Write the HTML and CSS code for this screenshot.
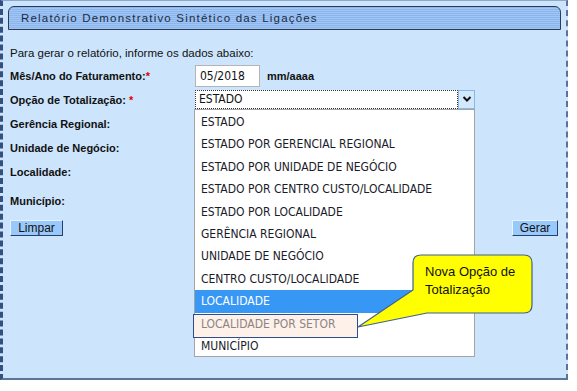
FILE: index.html
```html
<!DOCTYPE html>
<html lang="pt-BR">
<head>
  <meta charset="UTF-8">
  <meta name="viewport" content="width=device-width, initial-scale=1.0">
  <title>Relatório Demonstrativo Sintético das Ligações</title>
<link rel="stylesheet" href="styles.css">
</head>
<body>
  <div class="frame">
    <div class="title-bar">Relatório Demonstrativo Sintético das Ligações</div>
    <p class="intro">Para gerar o relatório, informe os dados abaixo:</p>

    <div class="form">
      <div class="row">
        <label class="label">Mês/Ano do Faturamento:<span class="req">*</span></label>
        <input class="field" type="text" value="05/2018">
        <span class="hint">mm/aaaa</span>
      </div>
      <div class="row">
        <label class="label">Opção de Totalização: <span class="req">*</span></label>
        <div class="select">
          <span class="select-value">ESTADO</span>
          <span class="select-arrow">
            <svg width="10" height="8" viewBox="0 0 10 8"><polyline points="1.5,2 5,5.5 8.5,2" fill="none" stroke="#111" stroke-width="2"/></svg>
          </span>
        </div>
      </div>
      <div class="row"><label class="label">Gerência Regional:</label></div>
      <div class="row row-short"><label class="label">Unidade de Negócio:</label></div>
      <div class="row row-mid"><label class="label">Localidade:</label></div>
      <div class="row row-tall"><label class="label">Município:</label></div>
    </div>

    <div class="actions">
      <button class="btn">Limpar</button>
      <button class="btn btn-gerar">Gerar</button>
    </div>

    <ul class="options">
      <li class="option">ESTADO</li>
      <li class="option">ESTADO POR GERENCIAL REGIONAL</li>
      <li class="option">ESTADO POR UNIDADE DE NEGÓCIO</li>
      <li class="option">ESTADO POR CENTRO CUSTO/LOCALIDADE</li>
      <li class="option">ESTADO POR LOCALIDADE</li>
      <li class="option">GERÊNCIA REGIONAL</li>
      <li class="option">UNIDADE DE NEGÓCIO</li>
      <li class="option">CENTRO CUSTO/LOCALIDADE</li>
      <li class="option selected">LOCALIDADE</li>
      <li class="option new">LOCALIDADE POR SETOR</li>
      <li class="option">MUNICÍPIO</li>
    </ul>

    <div class="callout">
      <svg class="callout-shape" width="180" height="78" viewBox="0 0 180 78">
        <path d="M66 2 H169 Q177 2 177 10 V52 Q177 60 169 60 H72 L3 74 L58 37 V10 Q58 2 66 2 Z" fill="#ffff00" stroke="#41608f" stroke-width="1.2"/>
      </svg>
      <p class="callout-text">Nova Opção de<br>Totalização</p>
    </div>
  </div>
</body>
</html>
```

FILE: styles.css
```css
html, body {
  margin: 0;
  padding: 0;
  background-color: #fff;
  font-family: "Liberation Sans", Arial, Helvetica, sans-serif;
}

.frame {
  position: relative;
  box-sizing: border-box;
  width: 568px;
  height: 380px;
  background-color: #cce5fc;
  border-top: 1px solid #8ea8cc;
  border-left: 3px dashed #33507e;
  border-right: 2px dashed #5a7496;
  border-bottom: 2px solid #5b7594;
}

.title-bar {
  box-sizing: border-box;
  margin: 5px 0 0 5px;
  width: 553px;
  height: 24px;
  padding-left: 12px;
  line-height: 22px;
  font-size: 11.5px;
  letter-spacing: 1.2px;
  color: #1c2c44;
  border: 1px solid #2b3b55;
  border-radius: 6px 6px 0 0;
  background: repeating-linear-gradient(#8bb5ed 0, #8bb5ed 1px, #a2c6f3 1px, #a2c6f3 2px);
}

.intro {
  margin: 15px 0 0 7px;
  line-height: 16px;
  font-size: 11.5px;
  color: #111;
}

.form {
  margin-top: 3px;
  padding-left: 7px;
}

.row {
  display: flex;
  align-items: center;
  height: 24px;
}

.row-short {
  height: 23px;
}

.row-mid {
  height: 26px;
}

.row-tall {
  height: 32px;
}

.label {
  width: 185px;
  flex-shrink: 0;
  font-size: 11px;
  font-weight: bold;
  color: #111;
}

.req {
  color: #e00000;
}

.field {
  box-sizing: border-box;
  width: 65px;
  height: 22px;
  margin: 0;
  padding: 0 4px;
  border: 1px solid #b4b4b4;
  background: #fff;
  font-family: "DejaVu Sans Condensed", "DejaVu Sans", sans-serif;
  font-size: 12px;
  color: #111;
}

.hint {
  margin-left: 7px;
  font-size: 11px;
  font-weight: bold;
  color: #111;
}

.select {
  display: flex;
  box-sizing: border-box;
  width: 280px;
  height: 19px;
  margin-top: -2px;
  background: #fff;
}

.select-value {
  flex: 1;
  box-sizing: border-box;
  padding-left: 3px;
  line-height: 17px;
  border: 1px dotted #333;
  font-family: "DejaVu Sans Condensed", "DejaVu Sans", sans-serif;
  font-size: 12px;
  color: #111;
}

.select-arrow {
  display: flex;
  align-items: center;
  justify-content: center;
  width: 15px;
  border: 1px solid #86b8ea;
  background: #d3e8fb;
}

.actions {
  display: flex;
  justify-content: space-between;
  margin-top: 3px;
  padding: 0 8px 0 7px;
}

.btn {
  box-sizing: border-box;
  width: 53px;
  height: 16px;
  padding: 0;
  font-family: "Liberation Sans", Arial, sans-serif;
  font-size: 12px;
  line-height: 13px;
  color: #111;
  background: #99c8fb;
  border: 1px solid;
  border-color: #e6f2ff #27406b #27406b #e6f2ff;
}

.btn-gerar {
  width: 46px;
}

.options {
  position: absolute;
  z-index: 2;
  left: 191px;
  top: 108px;
  box-sizing: border-box;
  width: 281px;
  height: 248px;
  margin: 0;
  padding: 1px 0 0;
  list-style: none;
  background: #fff;
  border: 1px solid #a4a4a4;
}

.option {
  position: relative;
  height: 22.4px;
  line-height: 22.4px;
  padding-left: 6px;
  font-family: "DejaVu Sans Condensed", "DejaVu Sans", sans-serif;
  font-size: 12px;
  color: #1a1a2a;
}

.option.selected {
  background: #3797f5;
  color: #fff;
}

.option.new {
  color: #8c8480;
}

.option.new::before {
  content: "";
  position: absolute;
  z-index: -1;
  left: -2px;
  top: 1px;
  width: 165px;
  height: 24px;
  box-sizing: border-box;
  background: #fdf1ea;
  border: 1.5px solid #2e4d8a;
}

.callout {
  position: absolute;
  z-index: 3;
  left: 352px;
  top: 252px;
  width: 180px;
  height: 78px;
}

.callout-shape {
  position: absolute;
  left: 0;
  top: 0;
}

.callout-text {
  position: relative;
  margin: 0;
  padding: 10px 0 0 70px;
  line-height: 18px;
  font-family: "Liberation Sans", Arial, sans-serif;
  font-size: 13px;
  color: #111;
}
```
